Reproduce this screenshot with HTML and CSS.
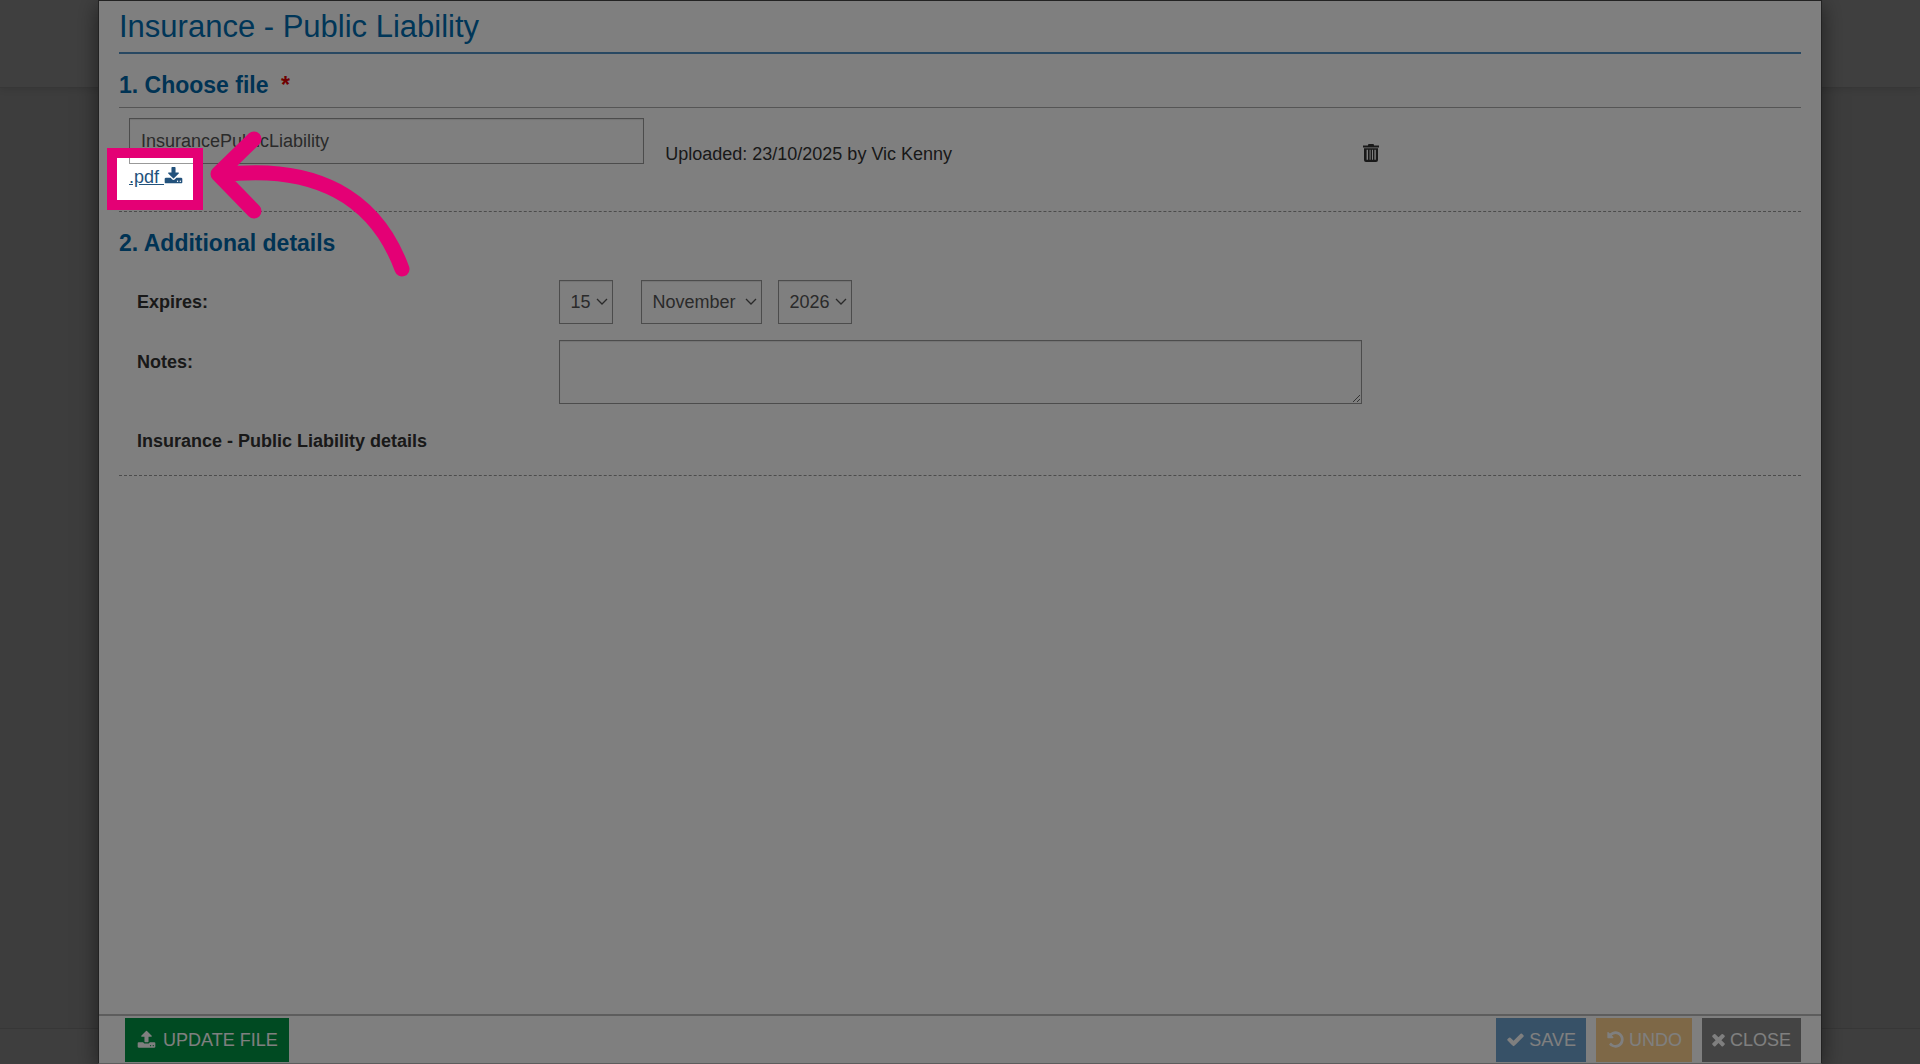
FILE: index.html
```html
<!DOCTYPE html>
<html lang="en">
<head>
    <meta charset="UTF-8">
    <meta name="viewport" content="width=device-width, initial-scale=1.0">
    <title>Insurance - Public Liability</title>
    <link rel="stylesheet" href="styles.css">
</head>
<body>
    <div class="page">
        <div class="page-header"></div>
        <div class="page-footer"></div>
    </div>
    <div class="backdrop"></div>

    <div class="modal" role="dialog" aria-labelledby="modalTitle">
        <div class="modal-body">
            <h1 id="modalTitle">Insurance - Public Liability</h1>

            <section class="file-section">
                <h2>1. Choose file <span class="required">*</span></h2>
                <div class="file-row">
                    <div class="file-name">
                        <input type="text" class="control" aria-label="File name" value="InsurancePublicLiability">
                        <a href="#" class="download">.pdf <svg class="icon" viewBox="0 0 1792 1792"><path d="M1344 1344q0-26-19-45t-45-19-45 19-19 45 19 45 45 19 45-19 19-45zm256 0q0-26-19-45t-45-19-45 19-19 45 19 45 45 19 45-19 19-45zm128-224v320q0 40-28 68t-68 28h-1472q-40 0-68-28t-28-68v-320q0-40 28-68t68-28h465l135 136q58 56 136 56t136-56l136-136h464q40 0 68 28t28 68zm-325-569q17 41-14 70l-448 448q-18 19-45 19t-45-19l-448-448q-31-29-14-70 17-39 59-39h256v-448q0-26 19-45t45-19h256q26 0 45 19t19 45v448h256q42 0 59 39z"/></svg></a>
                        <div class="highlight">
                            <svg class="arrow" viewBox="0 0 210 150">
                                <path d="M48 11L12 46L48 83M14 47C110 35 170 70 196 141"/>
                            </svg>
                        </div>
                    </div>
                    <span>Uploaded: 23/10/2025 by Vic Kenny</span>
                    <div>
                        <button class="btn-delete" aria-label="Delete file">
                            <svg viewBox="0 0 16 18"><path d="M0 1.500h5V.9Q5 0 6 0h4q1 0 1 .9v.6h5v2H0zM1 4.300h14V16q0 2-2 2H3q-2 0-2-2zm2.600 1.500v10h1.400v-10zm3 0v10h1v-10zm2.400 0v10h1v-10zm2.400 0v10h1.400v-10z" fill-rule="evenodd"/></svg>
                        </button>
                    </div>
                </div>
            </section>

            <section class="details-section">
                <h2>2. Additional details</h2>
                <div class="form-row">
                    <label for="day">Expires:</label>
                    <div class="date">
                        <select id="day" class="control day"><option>15</option></select>
                        <select class="control month" aria-label="Month"><option>November</option></select>
                        <select class="control year" aria-label="Year"><option>2026</option></select>
                    </div>
                </div>
                <div class="form-row">
                    <label for="notes">Notes:</label>
                    <textarea id="notes" class="control"></textarea>
                </div>
                <h3>Insurance - Public Liability details</h3>
            </section>
        </div>

        <div class="modal-footer">
            <button class="btn btn-update"><svg class="icon" viewBox="0 0 1792 1792"><path d="M1344 1472q0-26-19-45t-45-19-45 19-19 45 19 45 45 19 45-19 19-45zm256 0q0-26-19-45t-45-19-45 19-19 45 19 45 45 19 45-19 19-45zm128-224v320q0 40-28 68t-68 28h-1472q-40 0-68-28t-28-68v-320q0-40 28-68t68-28h427q21 56 70.500 92t110.500 36h256q61 0 110.500-36t70.500-92h427q40 0 68 28t28 68zm-325-648q-17 40-59 40h-256v448q0 26-19 45t-45 19h-256q-26 0-45-19t-19-45v-448h-256q-42 0-59-40-17-39 14-69l448-448q18-19 45-19t45 19l448 448q31 30 14 69z"/></svg>UPDATE FILE</button>
            <div class="actions">
                <button class="btn btn-save"><svg class="icon" viewBox="0 0 1792 1792"><path d="M1671 566q0 40-28 68l-724 724-136 136q-28 28-68 28t-68-28l-136-136-362-362q-28-28-28-68t28-68l136-136q28-28 68-28t68 28l294 295 656-657q28-28 68-28t68 28l136 136q28 28 28 68z"/></svg>SAVE</button>
                <button class="btn btn-undo"><svg class="icon" viewBox="0 0 1792 1792"><path d="M1664 896q0 156-61 298t-164 245-245 164-298 61q-172 0-327-72.500t-264-204.500q-7-10-6.500-22.500t8.500-20.500l137-138q10-9 25-9 16 2 23 12 73 95 179 147t225 52q104 0 198.500-40.500t163.500-109.500 109.500-163.500 40.500-198.500-40.500-198.500-109.500-163.500-163.500-109.500-198.500-40.500q-98 0-188 35.500t-160 101.500l137 138q31 30 14 69-17 40-59 40h-448q-26 0-45-19t-19-45v-448q0-42 40-59 39-17 69 14l130 129q107-101 244.500-156.500t284.500-55.500q156 0 298 61t245 164 164 245 61 298z"/></svg>UNDO</button>
                <button class="btn btn-close"><svg class="icon icon-times" viewBox="302 0 1188 1792"><path d="M1490 1322q0 40-28 68l-136 136q-28 28-68 28t-68-28l-294-294-294 294q-28 28-68 28t-68-28l-136-136q-28-28-28-68t28-68l294-294-294-294q-28-28-28-68t28-68l136-136q28-28 68-28t68 28l294 294 294-294q28-28 68-28t68 28l136 136q28 28 28 68t-28 68l-294 294 294 294q28 28 28 68z"/></svg>CLOSE</button>
            </div>
        </div>
    </div>
</body>
</html>
```

FILE: styles.css
```css
* {
    box-sizing: border-box;
}
body {
    margin: 0;
    height: 100vh;
    overflow: hidden;
    font-family: "Liberation Sans", Arial, sans-serif;
    font-size: 18px;
    line-height: 24px;
    color: #333;
}
.page {
    display: flex;
    flex-direction: column;
    justify-content: space-between;
    height: 100%;
    background-color: #f5f5f5;
}
.page-header {
    height: 88px;
    background-color: #fff;
    border-bottom: 1px solid #ddd;
    box-shadow: 0 2px 8px rgba(0, 0, 0, 0.1);
}
.page-footer {
    height: 36px;
    background-color: #fafafa;
    border-top: 1px solid #ddd;
}
.backdrop {
    position: absolute;
    inset: 0;
    background-color: rgba(0, 0, 0, 0.5);
}
.modal {
    position: absolute;
    inset: 0 98px;
    display: flex;
    flex-direction: column;
    background-color: #fff;
    border: 1px solid #444;
    border-bottom-color: #bbb;
    box-shadow: 0 5px 20px rgba(0, 0, 0, 0.5);
}
.modal-body {
    flex: 1;
    padding: 0 20px;
}
h1 {
    margin: 0;
    padding: 6px 0 5px;
    font-size: 31px;
    font-weight: normal;
    line-height: 40px;
    color: #006cb0;
    border-bottom: 2px solid #5090c4;
}
h2 {
    margin: 0;
    font-size: 23px;
    line-height: 32px;
    color: #0066a8;
}
.required {
    margin-left: 6px;
    color: #e00000;
}
.file-section {
    padding-top: 15px;
    border-bottom: 1px dashed #999;
}
.file-section h2 {
    padding-bottom: 6px;
    border-bottom: 1px solid #aaa;
}
.file-row {
    display: grid;
    grid-template-columns: 31% 1fr 26%;
    column-gap: 21px;
    align-items: start;
    padding: 10px 10px 22px;
}
.file-row > span {
    margin-top: 24px;
}
.file-name {
    position: relative;
}
.control {
    font-family: inherit;
    font-size: 18px;
    color: #555;
    background-color: #fff;
    border: 1px solid #999;
    border-radius: 0;
    box-shadow: inset 0 1px 1px rgba(0, 0, 0, 0.1);
    padding: 0 11px;
}
input.control {
    display: block;
    width: 100%;
    height: 46px;
    margin-bottom: 1px;
}
.download {
    color: #23527c;
}
.icon {
    width: 19px;
    height: 19px;
    fill: currentColor;
}
.icon-times {
    width: 13px;
}
.download .icon {
    vertical-align: -3px;
}
/* dims everything outside the box */
.highlight {
    position: absolute;
    left: -22px;
    top: 30px;
    width: 96px;
    height: 62px;
    border: 10px solid #e40075;
    box-shadow: 0 0 0 9999px rgba(0, 0, 0, 0.5);
    pointer-events: none;
}
.arrow {
    position: absolute;
    left: 89px;
    top: -30px;
    width: 210px;
    height: 150px;
    fill: none;
    stroke: #e40075;
    stroke-width: 15;
    stroke-linecap: round;
    stroke-linejoin: round;
}
.btn-delete {
    margin-top: 24px;
    padding: 2px 4px;
    border: none;
    background: none;
    color: #333;
}
.btn-delete svg {
    display: block;
    width: 16px;
    height: 18px;
    fill: currentColor;
}
.details-section {
    padding-top: 15px;
    border-bottom: 1px dashed #999;
}
.form-row {
    display: grid;
    grid-template-columns: 25% 1fr 25%;
    column-gap: 10px;
    padding: 0 18px;
    margin-bottom: 16px;
}
.details-section h2 {
    margin-bottom: 21px;
}
.form-row label {
    padding-top: 10px;
    font-weight: bold;
}
.date {
    display: flex;
    gap: 16px;
}
select.control {
    appearance: none;
    height: 44px;
    background-image: url("data:image/svg+xml,%3Csvg xmlns='http://www.w3.org/2000/svg' width='12' height='8' viewBox='0 0 12 8'%3E%3Cpath d='M1 1l5 5 5-5' fill='none' stroke='%23555' stroke-width='1.3'/%3E%3C/svg%3E");
    background-repeat: no-repeat;
    background-position: right 4px center;
}
.day {
    width: 54px;
    margin-right: 12px;
}
.month {
    width: 121px;
}
.year {
    width: 74px;
}
textarea.control {
    display: block;
    width: 100%;
    height: 64px;
    resize: vertical;
}
h3 {
    margin: 0;
    padding: 9px 18px 22px;
    font-size: 18px;
    line-height: 24px;
}
.modal-footer {
    display: flex;
    justify-content: space-between;
    padding: 2px 20px 1px 26px;
    border-top: 2px solid #bbb;
}
.actions {
    display: flex;
    gap: 10px;
}
.btn {
    display: flex;
    align-items: center;
    gap: 4px;
    height: 44px;
    padding: 0 10px;
    border: none;
    font-family: inherit;
    font-size: 18px;
    color: #fff;
    cursor: pointer;
}
.btn .icon {
    margin-bottom: 2px;
}
.btn-update {
    gap: 7px;
    padding: 0 11px 0 12px;
    background-color: #009444;
}
.btn-save {
    background-color: #6ea2ce;
}
.btn-undo {
    background-color: #fcd08e;
}
.btn-close {
    gap: 5px;
    background-color: #888;
}
```
